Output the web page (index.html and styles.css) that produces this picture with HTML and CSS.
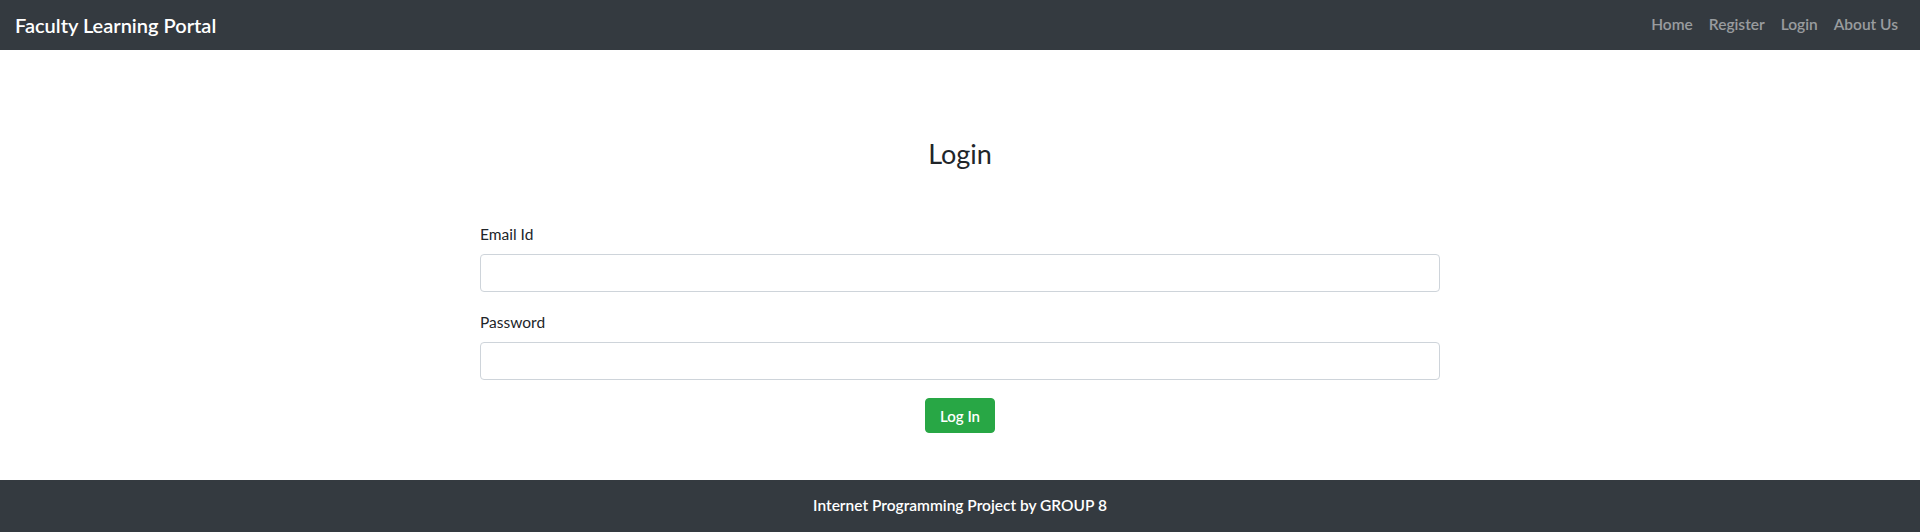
FILE: index.html
```html
<!DOCTYPE html>
<html lang="en">
<head>
<meta charset="utf-8">
<title>Faculty Learning Portal - Login</title>
<link rel="stylesheet" href="styles.css">
</head>
<body>
<header class="navbar">
  <a class="brand" href="#">Faculty Learning Portal</a>
  <nav class="nav-links">
    <a href="#">Home</a>
    <a href="#">Register</a>
    <a href="#">Login</a>
    <a href="#">About Us</a>
  </nav>
</header>
<main class="main">
  <h2 class="title">Login</h2>
  <form class="login-form">
    <div class="form-group">
      <label for="email">Email Id</label>
      <input id="email" type="email" class="form-control">
    </div>
    <div class="form-group">
      <label for="password">Password</label>
      <input id="password" type="password" class="form-control">
    </div>
    <div class="actions">
      <button type="button" class="btn-success">Log In</button>
    </div>
  </form>
</main>
<footer class="footer">Internet Programming Project by GROUP 8</footer>
</body>
</html>
```
FILE: styles.css
```css
* { box-sizing: border-box; }
html, body { margin: 0; padding: 0; }
body {
  font-family: Lato, "Noto Sans", sans-serif;
  color: #212529;
  background: #fff;
  font-size: 16px;
  line-height: 1.5;
}
a { text-decoration: none; }
.navbar {
  height: 50px;
  background: #343a40;
  display: flex;
  align-items: center;
  justify-content: space-between;
  padding: 0 16px 0 15px;
}
.brand {
  color: #fff;
  font-size: 20px;
  font-weight: 600;
}
.nav-links { display: flex; }
.nav-links a {
  color: rgba(255,255,255,.5);
  font-size: 15.5px;
  font-weight: 600;
  padding: 0 8px;
}
.nav-links a:last-child { padding-right: 6px; }
.main {
  width: 960px;
  margin: 0 auto;
  padding: 88px 0 47px;
}
.title {
  margin: 0;
  text-align: center;
  font-size: 27px;
  font-weight: 400;
  line-height: 32px;
  margin-bottom: 52px;
}
.form-group { margin-bottom: 18px; }
.form-group:last-of-type { margin-bottom: 23px; }
label {
  display: block;
  font-size: 15.5px;
  line-height: 24px;
  margin-bottom: 8px;
}
.form-control {
  display: block;
  width: 100%;
  height: 38px;
  border: 1px solid #ced4da;
  border-radius: 4px;
  background: #fff;
  font: inherit;
  padding: 6px 12px;
}
.actions { display: flex; justify-content: center; }
.btn-success {
  background: #28a745;
  border: 1px solid #28a745;
  color: #fff;
  font-family: inherit;
  font-size: 15px;
  font-weight: 600;
  border-radius: 4px;
  height: 35px;
  width: 70px;
  padding: 0;
}
.footer {
  height: 52px;
  background: #343a40;
  color: #fff;
  display: flex;
  align-items: center;
  justify-content: center;
  font-size: 15.5px;
  font-weight: 600;
}
```
